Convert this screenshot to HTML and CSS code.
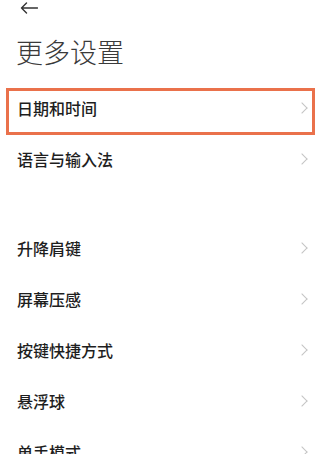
FILE: index.html
```html
<!DOCTYPE html>
<html lang="zh">
<head>
<meta charset="utf-8">
<link rel="stylesheet" href="styles.css">
</head>
<body>
<div class="topbar">
  <svg class="back" width="18" height="12" viewBox="0 0 18 12"><path d="M17.5 6H1.5M6.5 1L1.5 6l5 5" fill="none" stroke="#333" stroke-width="1.4" stroke-linecap="round" stroke-linejoin="round"/></svg>
</div>
<h1 class="title">更多设置</h1>
<ul class="list">
  <li class="row">日期和时间<span class="chev"></span><div class="highlight"></div></li>
  <li class="row">语言与输入法<span class="chev"></span></li>
</ul>
<ul class="list section">
  <li class="row">升降肩键<span class="chev"></span></li>
  <li class="row">屏幕压感<span class="chev"></span></li>
  <li class="row">按键快捷方式<span class="chev"></span></li>
  <li class="row">悬浮球<span class="chev"></span></li>
  <li class="row">单手模式<span class="chev"></span></li>
</ul>
</body>
</html>
```
FILE: styles.css
```css
html, body {
  margin: 0;
  padding: 0;
  background: #fff;
  overflow: hidden;
  font-family: "Noto Sans CJK SC", "Noto Sans", sans-serif;
}
.topbar {
  height: 16px;
  padding-left: 20px;
  display: flex;
  align-items: flex-start;
}
.back { margin-top: 2px; display: block; }
.title {
  margin: 18px 0 0;
  height: 36px;
  line-height: 36px;
  font-size: 27px;
  font-weight: 300;
  color: #3a3a3a;
  padding-left: 16px;
}
.list {
  list-style: none;
  margin: 12px 0 0;
  padding: 0;
}
.list.section { margin-top: 38px; }
.row {
  position: relative;
  height: 51px;
  display: flex;
  align-items: center;
  justify-content: space-between;
  padding: 0 16px 0 17px;
  font-size: 16px;
  font-weight: 500;
  color: #1e1e1e;
}
.chev {
  width: 7px;
  height: 7px;
  border-right: 1.2px solid #c4c4c4;
  border-top: 1.2px solid #c4c4c4;
  transform: rotate(45deg);
  margin-right: 0;
}
.highlight {
  position: absolute;
  left: 6px;
  top: 6px;
  width: 303px;
  height: 41px;
  border: 3px solid #ea714b;
}
```
